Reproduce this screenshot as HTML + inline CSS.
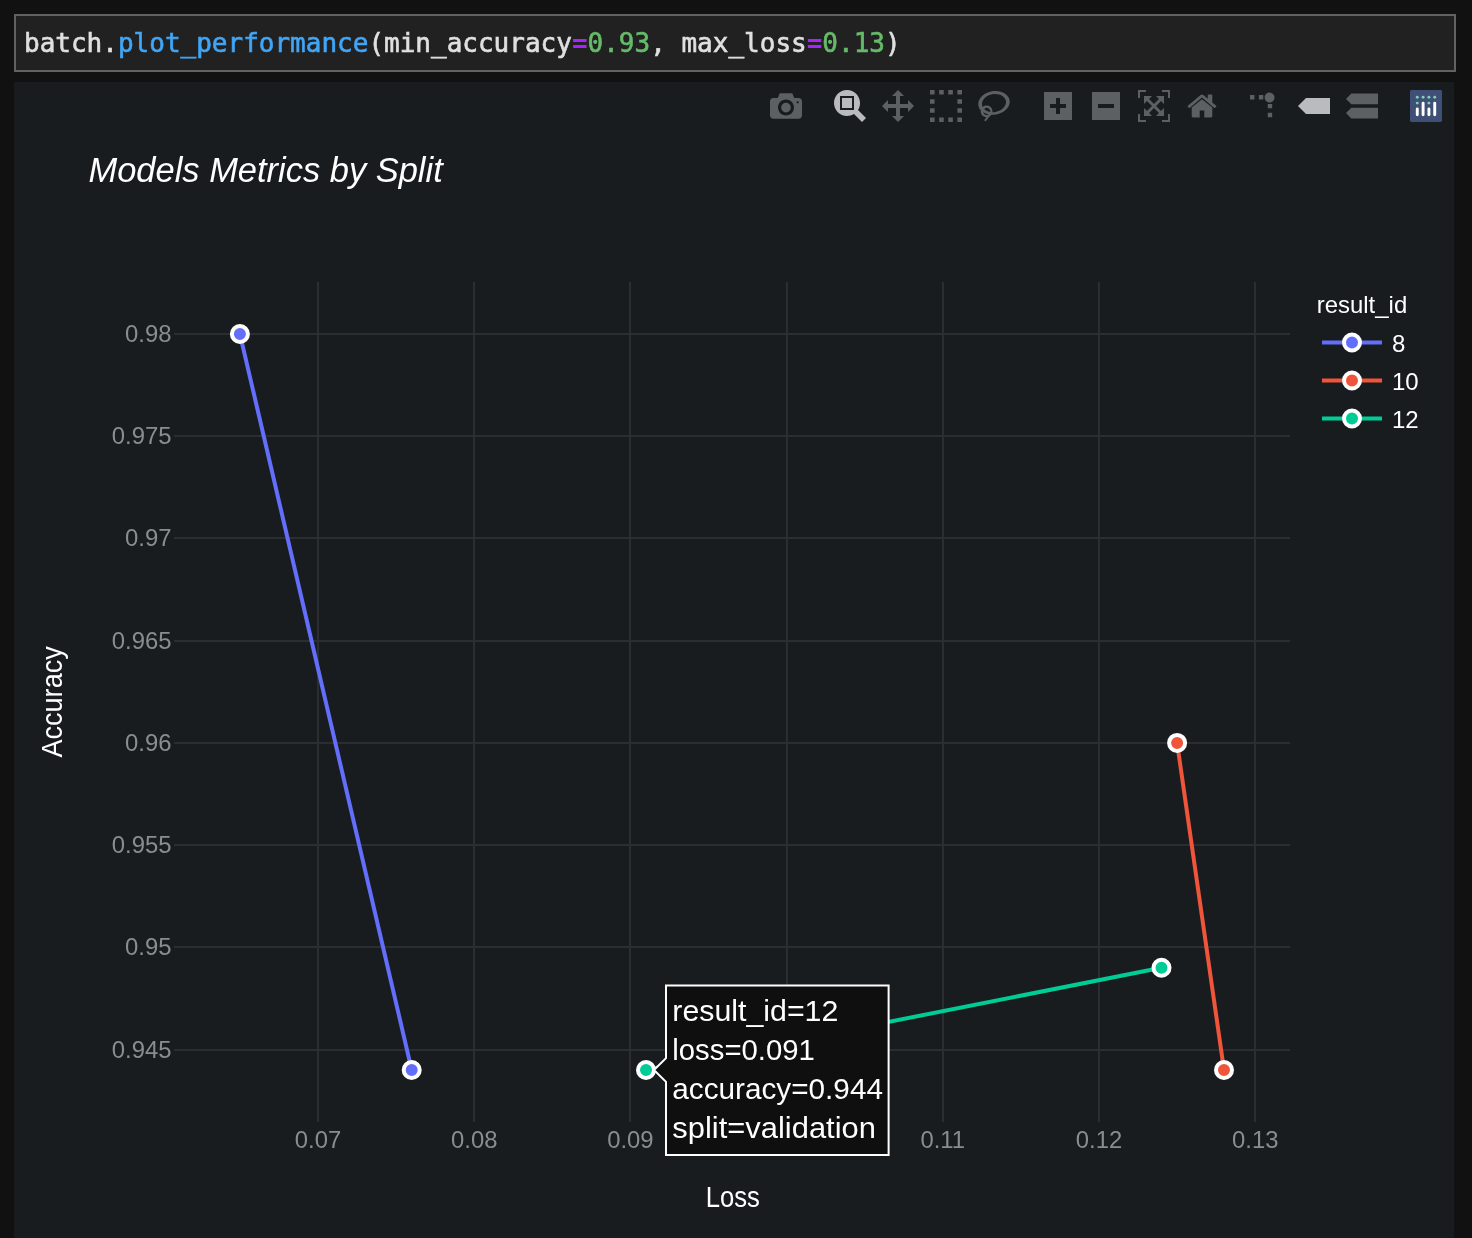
<!DOCTYPE html>
<html lang="en">
<head>
<meta charset="utf-8">
<title>Models Metrics by Split</title>
<style>
  html, body { margin: 0; padding: 0; }
  body {
    width: 1472px; height: 1238px; overflow: hidden;
    background: #111111;
    font-family: "Liberation Sans", sans-serif;
    position: relative;
  }
  .cell {
    position: absolute; left: 14px; top: 14px;
    width: 1442px; height: 58px; box-sizing: border-box;
    border: 2px solid #616161; background: #212121;
  }
  .cell pre {
    margin: 0; position: absolute; left: 8px; top: 10px;
    font-family: "DejaVu Sans Mono", "Liberation Mono", monospace;
    font-size: 26px; line-height: 34px; color: #e0e0e0;
    white-space: pre; will-change: transform;
    -webkit-text-stroke: 0.6px currentColor;
  }
  .cell .p { color: #42a5f5; }
  .cell .o { color: #aa22ff; font-weight: bold; -webkit-text-stroke: 0; }
  .cell .n { color: #66bb6a; }
  .panel {
    position: absolute; left: 14px; top: 82px;
    width: 1440px; height: 1156px; background: #181c1f;
  }
  svg.plot { position: absolute; left: 0; top: 0; will-change: transform; }
  svg text { font-family: "Liberation Sans", sans-serif; }
</style>
</head>
<body>
<div class="cell"><pre>batch.<span class="p">plot_performance</span>(min_accuracy<span class="o">=</span><span class="n">0.93</span>, max_loss<span class="o">=</span><span class="n">0.13</span>)</pre></div>
<div class="panel"></div>
<svg class="plot" width="1472" height="1238" viewBox="0 0 1472 1238">
  <!-- GRID -->
  <g id="grid" stroke="#2a2e32" stroke-width="2" fill="none">
    <path d="M318,282V1122M474,282V1122M630,282V1122M787,282V1122M943,282V1122M1099,282V1122M1255,282V1122"/>
    <path d="M174,334H1290M174,436H1290M174,538H1290M174,641H1290M174,743H1290M174,845H1290M174,947H1290M174,1050H1290"/>
  </g>
  <!-- TRACES -->
  <g id="traces" fill="none" stroke-width="4" stroke-linejoin="round">
    <path d="M239.9,334L411.7,1070" stroke="#636efa"/>
    <path d="M1177.1,742.9L1224,1070" stroke="#ef553b"/>
    <path d="M646,1070L1161.5,967.8" stroke="#00cc96"/>
  </g>
  <g id="markers" stroke="#ffffff" stroke-width="4">
    <circle cx="239.9" cy="334" r="8" fill="#636efa"/>
    <circle cx="411.7" cy="1070" r="8" fill="#636efa"/>
    <circle cx="1177.1" cy="742.9" r="8" fill="#ef553b"/>
    <circle cx="1224" cy="1070" r="8" fill="#ef553b"/>
    <circle cx="646" cy="1070" r="8" fill="#00cc96"/>
    <circle cx="1161.5" cy="967.8" r="8" fill="#00cc96"/>
  </g>
  <!-- TICKS -->
  <g id="xticks" font-size="24.6" fill="#898d92" text-anchor="middle">
    <text transform="translate(318,1148) scale(0.97,1)">0.07</text>
    <text transform="translate(474.2,1148) scale(0.97,1)">0.08</text>
    <text transform="translate(630.4,1148) scale(0.97,1)">0.09</text>
    <text transform="translate(786.6,1148) scale(0.97,1)">0.1</text>
    <text transform="translate(942.8,1148) scale(0.97,1)">0.11</text>
    <text transform="translate(1099,1148) scale(0.97,1)">0.12</text>
    <text transform="translate(1255.2,1148) scale(0.97,1)">0.13</text>
  </g>
  <g id="yticks" font-size="24.6" fill="#898d92" text-anchor="end">
    <text transform="translate(171.6,342.0) scale(0.972,1)">0.98</text>
    <text transform="translate(171.6,444.2) scale(0.972,1)">0.975</text>
    <text transform="translate(171.6,546.4) scale(0.972,1)">0.97</text>
    <text transform="translate(171.6,648.7) scale(0.972,1)">0.965</text>
    <text transform="translate(171.6,750.9) scale(0.972,1)">0.96</text>
    <text transform="translate(171.6,853.1) scale(0.972,1)">0.955</text>
    <text transform="translate(171.6,955.3) scale(0.972,1)">0.95</text>
    <text transform="translate(171.6,1057.6) scale(0.972,1)">0.945</text>
  </g>
  <!-- TITLES -->
  <text id="title" transform="translate(88.5,182) scale(0.985,1)" font-size="35" font-style="italic" fill="#ffffff">Models Metrics by Split</text>
  <text id="xtitle" transform="translate(732.8,1207) scale(0.885,1)" font-size="29" fill="#ffffff" text-anchor="middle">Loss</text>
  <text id="ytitle" transform="translate(62.3,701.9) rotate(-90) scale(0.934,1)" font-size="29" fill="#ffffff" text-anchor="middle">Accuracy</text>
  <!-- LEGEND -->
  <g id="legend" font-size="24" fill="#ffffff">
    <text transform="translate(1316.7,313.2) scale(0.97,1)" font-size="24.7">result_id</text>
    <g stroke-width="4" fill="none">
      <path d="M1322,342.5H1382" stroke="#636efa"/>
      <path d="M1322,380.5H1382" stroke="#ef553b"/>
      <path d="M1322,418.5H1382" stroke="#00cc96"/>
    </g>
    <g stroke="#ffffff" stroke-width="4">
      <circle cx="1352" cy="342.5" r="8" fill="#636efa"/>
      <circle cx="1352" cy="380.5" r="8" fill="#ef553b"/>
      <circle cx="1352" cy="418.5" r="8" fill="#00cc96"/>
    </g>
    <text x="1392" y="351.5">8</text>
    <text x="1392" y="389.5">10</text>
    <text x="1392" y="427.5">12</text>
  </g>
  <!-- HOVER -->
  <g id="hover">
    <path d="M654,1070L666,1058.2V985.5H888.6V1155H666V1081.8Z" fill="#0f0f0f" stroke="#ffffff" stroke-width="2"/>
    <g font-size="29" fill="#ffffff">
      <text transform="translate(672.3,1020.9) scale(1.046,1)">result_id=12</text>
      <text transform="translate(672.3,1059.8) scale(1.011,1)">loss=0.091</text>
      <text transform="translate(672.3,1098.7) scale(1.025,1)">accuracy=0.944</text>
      <text transform="translate(672.3,1137.6) scale(1.066,1)">split=validation</text>
    </g>
  </g>
  <!-- MODEBAR -->
  <g id="modebar" fill="#ffffff">
    <svg x="770" y="90" width="32" height="32" viewBox="0 0 1000 1000"><path fill-opacity="0.3" transform="matrix(1 0 0 -1 0 850)" d="m500 450c-83 0-150-67-150-150 0-83 67-150 150-150 83 0 150 67 150 150 0 83-67 150-150 150z m400 150h-120c-16 0-34 13-39 29l-31 93c-6 15-23 28-40 28h-340c-16 0-34-13-39-28l-31-94c-6-15-23-28-40-28h-120c-55 0-100-45-100-100v-450c0-55 45-100 100-100h800c55 0 100 45 100 100v450c0 55-45 100-100 100z m-400-550c-138 0-250 112-250 250 0 138 112 250 250 250 138 0 250-112 250-250 0-138-112-250-250-250z m365 380c-19 0-35 16-35 35 0 19 16 35 35 35 19 0 35-16 35-35 0-19-16-35-35-35z"/></svg>
    <svg x="834" y="90" width="32" height="32" viewBox="0 0 1000 1000"><path fill-opacity="0.7" transform="matrix(1 0 0 -1 0 850)" d="m1000-25l-250 251c40 63 63 138 63 218 0 224-182 406-407 406-224 0-406-182-406-406s183-406 407-406c80 0 155 22 218 62l250-250 125 125z m-812 250l0 438 437 0 0-438-437 0z m62 375l313 0 0-312-313 0 0 312z"/></svg>
    <svg x="882" y="90" width="32" height="32" viewBox="0 0 1000 1000"><path fill-opacity="0.3" transform="matrix(1 0 0 -1 0 850)" d="m1000 350l-187 188 0-125-250 0 0 250 125 0-188 187-187-187 125 0 0-250-250 0 0 125-188-188 186-187 0 125 252 0 0-250-125 0 187-188 188 188-125 0 0 250 250 0 0-126 187 188z"/></svg>
    <svg x="930" y="90" width="32" height="32" viewBox="0 0 1000 1000"><path fill-opacity="0.3" transform="matrix(1 0 0 -1 0 850)" d="m0 850l0-143 143 0 0 143-143 0z m286 0l0-143 143 0 0 143-143 0z m285 0l0-143 143 0 0 143-143 0z m286 0l0-143 143 0 0 143-143 0z m-857-286l0-143 143 0 0 143-143 0z m857 0l0-143 143 0 0 143-143 0z m-857-285l0-143 143 0 0 143-143 0z m857 0l0-143 143 0 0 143-143 0z m-857-286l0-143 143 0 0 143-143 0z m286 0l0-143 143 0 0 143-143 0z m285 0l0-143 143 0 0 143-143 0z m286 0l0-143 143 0 0 143-143 0z"/></svg>
    <svg x="978" y="90" width="32" height="32" viewBox="0 0 1031 1000"><path fill-opacity="0.3" transform="matrix(1 0 0 -1 0 850)" d="m1018 538c-36 207-290 336-568 286-277-48-473-256-436-463 10-57 36-108 76-151-13-66 11-137 68-183 34-28 75-41 114-42l-55-70 0 0c-2-1-3-2-4-3-10-14-8-34 5-45 14-11 34-8 45 4 1 1 2 3 2 5l0 0 113 140c16 11 31 24 45 40 4 3 6 7 8 11 48-3 100 0 151 9 278 48 473 255 436 462z m-624-379c-80 14-149 48-197 96 42 42 109 47 156 9 33-26 47-66 41-105z m-187-74c-19 16-33 37-39 60 50-32 109-55 174-68-42-25-95-24-135 8z m360 75c-34-7-69-9-102-8 8 62-16 128-68 170-73 59-175 54-244-5-9 20-16 40-20 61-28 159 121 317 333 354s407-60 434-217c28-159-121-318-333-355z"/></svg>
    <svg x="1042" y="90" width="32" height="32" viewBox="0 0 875 1000"><path fill-opacity="0.3" transform="matrix(1 0 0 -1 0 850)" d="m1 787l0-875 875 0 0 875-875 0z m687-500l-187 0 0-187-125 0 0 187-188 0 0 125 188 0 0 187 125 0 0-187 187 0 0-125z"/></svg>
    <svg x="1090" y="90" width="32" height="32" viewBox="0 0 875 1000"><path fill-opacity="0.3" transform="matrix(1 0 0 -1 0 850)" d="m0 788l0-876 875 0 0 876-875 0z m688-500l-500 0 0 125 500 0 0-125z"/></svg>
    <svg x="1138" y="90" width="32" height="32" viewBox="0 0 1000 1000"><path fill-opacity="0.3" transform="matrix(1 0 0 -1 0 850)" d="m250 850l-187 0-63 0 0-62 0-188 63 0 0 188 187 0 0 62z m688 0l-188 0 0-62 188 0 0-188 62 0 0 188 0 62-62 0z m-875-938l0 188-63 0 0-188 0-62 63 0 187 0 0 62-187 0z m875 188l0-188-188 0 0-62 188 0 62 0 0 62 0 188-62 0z m-125 188l-1 0-93-94-156 156 156 156 92-93 2 0 0 250-250 0 0-2 93-92-156-156-156 156 94 92 0 2-250 0 0-250 0 0 93 93 157-156-157-156-93 94 0 0 0-250 250 0 0 0-94 93 156 157 156-157-93-93 0 0 250 0 0 250z"/></svg>
    <svg x="1186" y="90" width="32" height="32" viewBox="0 0 928.6 1000"><path fill-opacity="0.3" transform="matrix(1 0 0 -1 0 850)" d="m786 296v-267q0-15-11-26t-25-10h-214v214h-143v-214h-214q-15 0-25 10t-11 26v267q0 1 0 2t0 2l321 264 321-264q1-1 1-4z m124 39l-34-41q-5-5-12-6h-2q-7 0-12 3l-386 322-386-322q-7-4-13-4-7 2-12 7l-35 41q-4 5-3 13t6 12l401 334q18 15 42 15t43-15l136-114v109q0 8 5 13t13 5h107q8 0 13-5t5-13v-227l122-102q5-5 6-12t-4-13z"/></svg>
    <svg x="1250" y="90" width="32" height="32" viewBox="0 0 1000 1000"><path fill-opacity="0.3" transform="matrix(1.5 0 0 -1.5 0 850)" d="M512 409c0-57-46-104-103-104-57 0-104 47-104 104 0 57 47 103 104 103 57 0 103-46 103-103z m-327-39l92 0 0 92-92 0z m-185 0l92 0 0 92-92 0z m370-186l92 0 0 93-92 0z m0-184l92 0 0 92-92 0z"/></svg>
    <svg x="1298" y="90" width="32" height="32" viewBox="0 0 1500 1000"><path fill-opacity="0.7" transform="matrix(1 0 0 -1 0 850)" d="m375 725l0 0-375-375 375-374 0-1 1125 0 0 750-1125 0z"/></svg>
    <svg x="1346" y="90" width="32" height="32" viewBox="0 0 1125 1000"><path fill-opacity="0.3" transform="matrix(1 0 0 -1 0 850)" d="m187 786l0 2-187-188 188-187 0 0 937 0 0 373-938 0z m0-499l0 1-187-188 188-188 0 0 937 0 0 376-938-1z"/></svg>
    <svg x="1410" y="90" width="32" height="32" viewBox="0 0 132 132"><rect width="132" height="132" rx="6" ry="6" fill="#3f4f75"/><g fill="#80cfbe"><circle cx="78" cy="54" r="6"/><circle cx="102" cy="30" r="6"/><circle cx="78" cy="30" r="6"/><circle cx="54" cy="30" r="6"/><circle cx="30" cy="30" r="6"/><circle cx="30" cy="54" r="6"/></g><g fill="#ffffff"><path d="M30,72a6,6,0,0,0-6,6v24a6,6,0,0,0,12,0V78A6,6,0,0,0,30,72Z"/><path d="M78,72a6,6,0,0,0-6,6v24a6,6,0,0,0,12,0V78A6,6,0,0,0,78,72Z"/><path d="M54,48a6,6,0,0,0-6,6v48a6,6,0,0,0,12,0V54A6,6,0,0,0,54,48Z"/><path d="M102,48a6,6,0,0,0-6,6v48a6,6,0,0,0,12,0V54A6,6,0,0,0,102,48Z"/></g></svg>
  </g>
</svg>
</body>
</html>
